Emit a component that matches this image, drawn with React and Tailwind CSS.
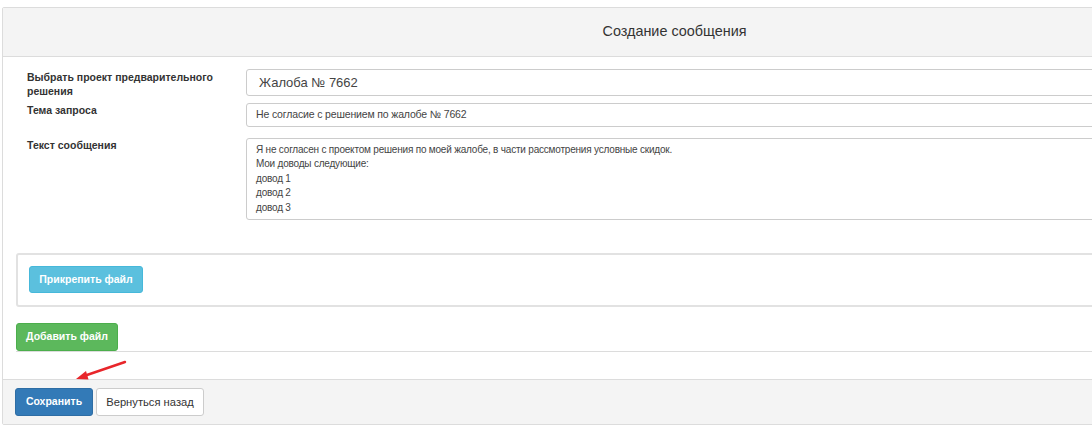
export default function App() {
  const font = { fontFamily: '"Liberation Sans", Arial, sans-serif' };
  return (
    <div className="relative w-[1092px] h-[432px] overflow-hidden bg-white text-[#333]" style={font}>
      <div className="ml-[2px] mt-[7px] w-[1345px] border border-[#dcdcdc] rounded-[2px]">
        <div className="h-[49px] bg-[#f4f4f4] border-b border-[#dcdcdc] flex items-center justify-center text-[14.4px] text-[#333]">
          Создание сообщения
        </div>
        <div className="pt-[12px]">
          <div className="flex">
            <div className="w-[243px] pl-[24px] pr-[8px] pt-[1px] text-[10.5px] font-bold leading-[14px]">
              Выбрать проект предварительного решения
            </div>
            <div className="flex-1 h-[27px] border border-[#ccc] rounded-[3px] pl-[12px] flex items-center text-[13px] text-[#444]">
              Жалоба № 7662
            </div>
          </div>
          <div className="flex mt-[5px]">
            <div className="w-[243px] pl-[24px] text-[10.5px] font-bold leading-[14px]">
              Тема запроса
            </div>
            <div className="flex-1 h-[24px] border border-[#ccc] rounded-[3px] pl-[9px] flex items-center text-[10.5px] tracking-[-0.15px] text-[#444]">
              Не согласие с решением по жалобе № 7662
            </div>
          </div>
          <div className="flex mt-[11px]">
            <div className="w-[243px] pl-[24px] text-[10.5px] font-bold leading-[14px]">
              Текст сообщения
            </div>
            <div className="flex-1 h-[82px] border border-[#ccc] rounded-[3px] pl-[9px] pt-[4px] text-[10px] tracking-[-0.2px] leading-[14.4px] text-[#444]">
              <div>Я не согласен с проектом решения по моей жалобе, в части рассмотрения условные скидок.</div>
              <div>Мои доводы следующие:</div>
              <div>довод 1</div>
              <div>довод 2</div>
              <div>довод 3</div>
            </div>
          </div>
          <div className="ml-[13px] mt-[33px] border-b border-[#dcdcdc]">
            <div className="h-[54px] border-2 border-[#e2e2e2] rounded-[3px] pl-[11px] pt-[11px]">
              <button className="h-[27px] w-[114px] rounded-[3px] bg-[#5bc0de] border border-[#46b8da] text-white text-[10.5px] font-bold">
                Прикрепить файл
              </button>
            </div>
            <button className="mt-[16px] block h-[28px] w-[102px] rounded-[3px] bg-[#5cb85c] border border-[#4cae4c] text-white text-[10.5px] font-bold">
              Добавить файл
            </button>
          </div>
        </div>
        <div className="mt-[27px] h-[45px] bg-[#f4f4f4] border-t border-[#dcdcdc] pl-[12px] flex items-center gap-[3px]">
          <button className="h-[28px] w-[78px] rounded-[3px] bg-[#337ab7] border border-[#2e6da4] text-white text-[10.5px] font-bold">
            Сохранить
          </button>
          <button className="h-[28px] w-[108px] rounded-[3px] bg-white border border-[#ccc] text-[#333] text-[11.2px]">
            Вернуться назад
          </button>
        </div>
      </div>
      <svg className="absolute left-0 top-0" width="200" height="432" viewBox="0 0 200 432">
        <line x1="125" y1="362" x2="84" y2="376" stroke="#e8262b" strokeWidth="2.4" strokeLinecap="round" />
        <polygon points="76,379 86,371 88.5,379.5" fill="#e8262b" />
      </svg>
    </div>
  );
}
